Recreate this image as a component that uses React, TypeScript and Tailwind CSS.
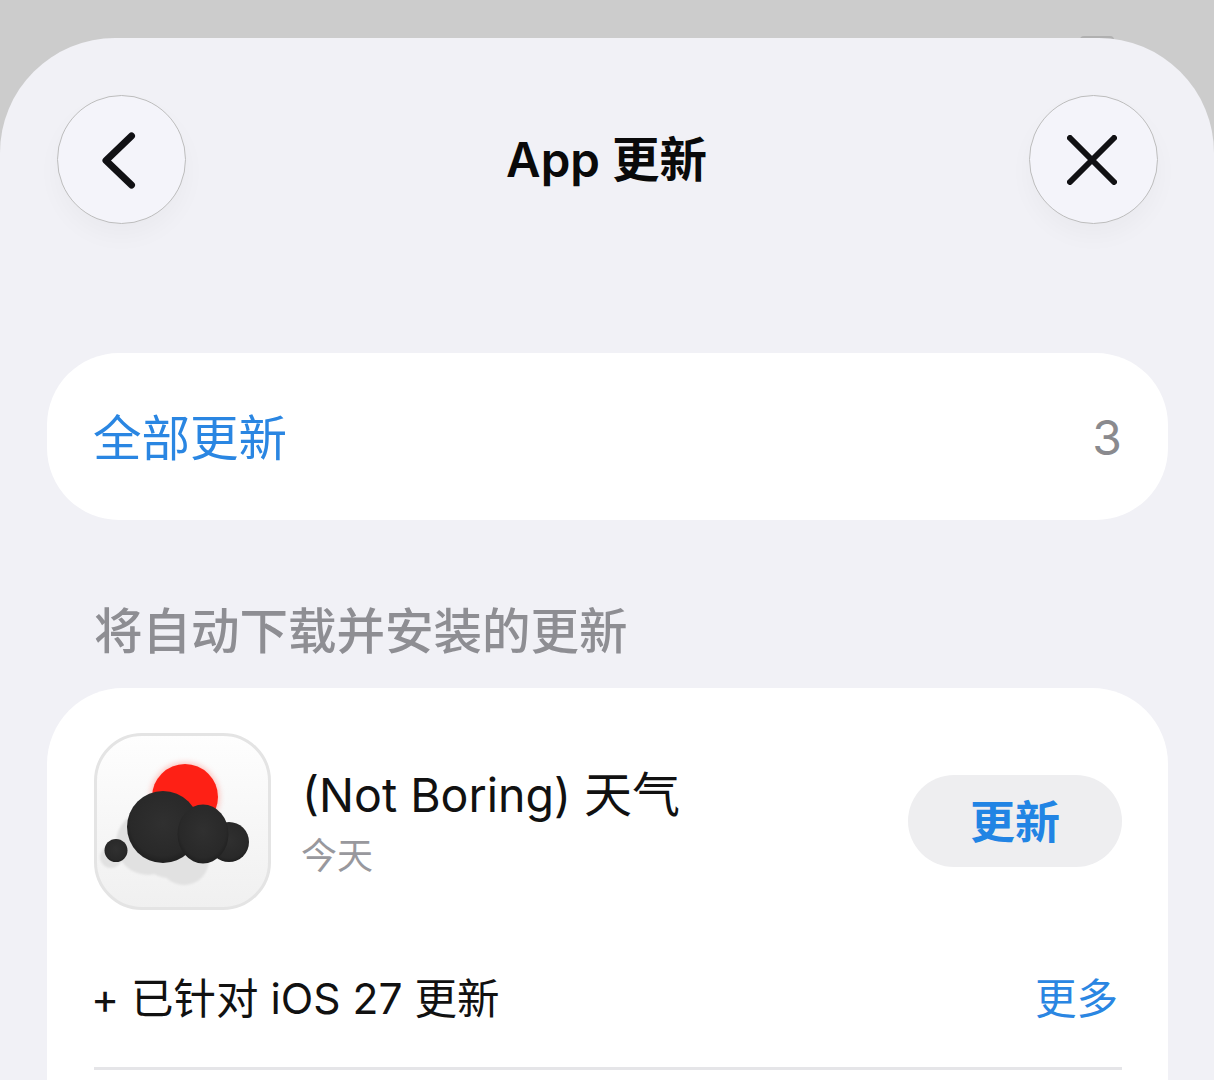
const fontStack = "font-['Inter','Noto_Sans_CJK_SC',sans-serif]";

const AppIcon = () => (
  <div className="w-[177px] h-[177px] shrink-0 rounded-[48px] border-[3px] border-[#e4e4e4] bg-gradient-to-b from-[#fefefe] to-[#f0f0f0] overflow-hidden">
    <svg width="171" height="171" viewBox="3 3 171 171">
      <defs>
        <radialGradient id="ball" cx="50%" cy="45%" r="60%">
          <stop offset="0%" stopColor="#303030" />
          <stop offset="75%" stopColor="#292929" />
          <stop offset="100%" stopColor="#1b1b1b" />
        </radialGradient>
        <filter id="glow" x="-30%" y="-30%" width="160%" height="160%">
          <feGaussianBlur stdDeviation="3" />
        </filter>
        <filter id="soft" x="-10%" y="-10%" width="120%" height="120%">
          <feGaussianBlur stdDeviation="0.8" />
        </filter>
      </defs>
      <g fill="#e1e1e1" filter="url(#soft)">
        <circle cx="54" cy="110" r="32" />
        <circle cx="75" cy="115" r="30" />
        <circle cx="90" cy="127" r="25" />
        <circle cx="17" cy="124" r="11" />
      </g>
      <circle cx="91" cy="64" r="34" fill="#ff8a80" opacity="0.6" filter="url(#glow)" />
      <circle cx="91" cy="64" r="33" fill="#fe2015" />
      <circle cx="135" cy="109" r="20" fill="url(#ball)" />
      <circle cx="69" cy="94" r="36" fill="url(#ball)" />
      <ellipse cx="109" cy="101" rx="25.5" ry="29.5" fill="url(#ball)" />
      <circle cx="22" cy="117.5" r="11.5" fill="url(#ball)" />
    </svg>
  </div>
);

const GlassButton = ({ children }: { children: React.ReactNode }) => (
  <button className="w-[129px] h-[129px] rounded-full bg-[#f4f4fa] border border-[#bdbdbd] shadow-[0_12px_24px_rgba(0,0,0,0.03)] flex items-center justify-center">
    {children}
  </button>
);

export default function App() {
  return (
    <div className={`w-[1214px] h-[1080px] overflow-hidden bg-[#cccccc] pt-[38px] relative ${fontStack}`}>
      <div className="absolute top-[36px] left-[1080px] w-[34px] h-[4px] rounded-t-full bg-[#b0b0b0]" />
      <div className="relative h-[1100px] bg-[#f1f1f6] rounded-t-[115px] pl-[47px] pr-[46px]">
        <header className="pt-[57px] px-[10px] flex items-center justify-between">
          <GlassButton>
            <svg width="40" height="60" viewBox="0 0 40 60" fill="none" stroke="#111114" strokeWidth="7" strokeLinecap="round" strokeLinejoin="round">
              <path d="M29.5 6 L4 30.5 L29.5 55" />
            </svg>
          </GlassButton>
          <h1 className="text-[47.5px] leading-[56px] font-semibold text-[#0a0a0a] -ml-[2px] mt-[1px]">App 更新</h1>
          <GlassButton>
            <svg width="50" height="50" viewBox="0 0 50 50" fill="none" stroke="#111114" strokeWidth="6" strokeLinecap="round" className="-ml-[3px]">
              <path d="M3 3 L47 47 M47 3 L3 47" />
            </svg>
          </GlassButton>
        </header>

        <section className="mt-[129px] h-[167px] rounded-[72px] bg-white px-[47px] flex items-center justify-between">
          <span className="text-[48.5px] leading-[56px] text-[#2a86e2] -ml-[1px] mt-[4px]">全部更新</span>
          <span className="text-[48px] leading-[56px] text-[#8a8a8e] -mr-[1px] mt-[2px]">3</span>
        </section>

        <h2 className="mt-[83px] ml-[47px] text-[48.5px] leading-[58px] font-medium text-[#8e8e93]">将自动下载并安装的更新</h2>

        <section className="mt-[27px] rounded-t-[76px] bg-white pl-[47px] pr-[46px] pt-[45px] pb-[40px]">
          <div className="flex items-center">
            <AppIcon />
            <div className="ml-[32px] flex-1 mt-[1px]">
              <div className="text-[46.5px] leading-[56px] text-[#111111] -ml-[1px]">(Not Boring) <span className="text-[48px]">天气</span></div>
              <div className="mt-[11px] text-[36px] leading-[44px] text-[#98989d] -ml-[2px]">今天</div>
            </div>
            <button className="w-[214px] h-[92px] -mt-[2px] pt-[4px] rounded-full bg-[#eeeef0] text-[45px] font-bold text-[#2184e4]">更新</button>
          </div>
          <div className="mt-[59px] flex items-center justify-between">
            <span className="text-[42.5px] leading-[60px] text-[#111111] -ml-[3px]">+ 已针对 iOS 27 更新</span>
            <span className="text-[41.5px] leading-[60px] text-[#2a86e2] mr-[4px]">更多</span>
          </div>
          <div className="mt-[38px] h-[3px] bg-[#e5e5e8]" />
        </section>
      </div>
    </div>
  );
}
